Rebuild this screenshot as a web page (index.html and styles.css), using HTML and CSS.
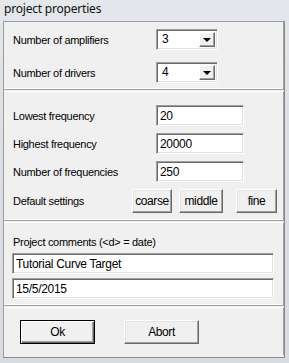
FILE: index.html
```html
<!DOCTYPE html>
<html lang="en">
<head>
    <meta charset="UTF-8">
    <title>project properties</title>
    <link rel="stylesheet" href="styles.css">
</head>
<body>
    <div class="titlebar">project properties</div>

    <div class="client">
        <div class="panel panel-counts">
            <label class="label">Number of amplifiers</label>
            <div class="combo">
                <span class="combo-value">3</span>
                <span class="combo-btn"><span class="arrow"></span></span>
            </div>
            <label class="label">Number of drivers</label>
            <div class="combo">
                <span class="combo-value">4</span>
                <span class="combo-btn"><span class="arrow"></span></span>
            </div>
        </div>

        <div class="panel panel-freq">
            <label class="label">Lowest frequency</label>
            <input class="edit edit-short" type="text" value="20">
            <label class="label">Highest frequency</label>
            <input class="edit edit-short" type="text" value="20000">
            <label class="label">Number of frequencies</label>
            <input class="edit edit-short" type="text" value="250">
            <label class="label label-defaults">Default settings</label>
            <div class="presets">
                <button class="button btn-coarse">coarse</button>
                <button class="button btn-middle">middle</button>
                <button class="button btn-fine">fine</button>
            </div>
        </div>

        <div class="panel panel-comments">
            <label class="label">Project comments (&lt;d&gt; = date)</label>
            <input class="edit edit-long" type="text" value="Tutorial Curve Target">
            <input class="edit edit-long" type="text" value="15/5/2015">
        </div>

        <div class="panel panel-actions">
            <button class="button button-wide button-default">Ok</button>
            <button class="button button-wide">Abort</button>
        </div>
    </div>
</body>
</html>
```

FILE: styles.css
```css
html, body {
    margin: 0;
    padding: 0;
}

body {
    width: 289px;
    height: 363px;
    overflow: hidden;
    font-family: "Liberation Sans", Arial, sans-serif;
    font-size: 11px;
    letter-spacing: -0.3px;
    color: #000;
    background: linear-gradient(180deg, #e4e7eb 0%, #dadfe5 40%, #d7dce3 100%);
}

.titlebar {
    height: 20px;
    line-height: 17px;
    padding-left: 4px;
    font-family: "Noto Sans", "Open Sans", sans-serif;
    font-size: 12px;
    letter-spacing: -0.2px;
    color: #111;
    box-sizing: border-box;
}

.client {
    margin-left: 3px;
    width: 282px;
    height: 337px;
    margin-top: 1px;
    background-color: #f0f0f0;
    border-left: 1px solid #9c9c9c;
    border-top: 1px solid #9c9c9c;
    border-right: 1px solid #8a8a8a;
    border-bottom: 1px solid #8a8a8a;
    box-sizing: border-box;
}

.panel {
    border-bottom: 1px solid #a0a0a0;
    box-shadow: inset 0 -1px 0 #fff;
    border-right: 1px solid #a0a0a0;
    box-sizing: border-box;
}

.panel + .panel {
    border-top: 1px solid #fff;
    margin-top: 1px;
}

.label {
    padding-left: 9px;
    white-space: nowrap;
}

/* top panel: the two combo boxes */
.panel-counts {
    height: 68px;
    display: grid;
    grid-template-columns: 152px 62px;
    grid-auto-rows: 21px;
    row-gap: 12px;
    align-items: center;
    padding-top: 7px;
}

.combo {
    height: 21px;
    display: flex;
    background: #fff;
    border-top: 1px solid #a0a0a0;
    border-left: 1px solid #a0a0a0;
    border-right: 1px solid #fff;
    border-bottom: 1px solid #fff;
    box-shadow: inset 1px 1px 0 #696969, inset -1px -1px 0 #e3e3e3;
    box-sizing: border-box;
    padding: 2px;
}

.combo-value {
    flex: 1;
    padding-left: 3px;
    line-height: 15px;
    font-size: 12px;
}

.combo-btn {
    width: 16px;
    background: #f0f0f0;
    border-top: 1px solid #fff;
    border-left: 1px solid #fff;
    border-right: 1px solid #696969;
    border-bottom: 1px solid #696969;
    box-shadow: inset -1px -1px 0 #a0a0a0;
    box-sizing: border-box;
    display: flex;
    align-items: center;
    justify-content: center;
}

.arrow {
    width: 0;
    height: 0;
    border-left: 4px solid transparent;
    border-right: 4px solid transparent;
    border-top: 4px solid #000;
    margin-left: -1px;
}

/* middle panel: frequency settings */
.panel-freq {
    height: 130px;
    display: grid;
    grid-template-columns: 152px 88px;
    grid-template-rows: 21px 21px 21px 24px;
    row-gap: 7px;
    align-items: center;
    padding-top: 13px;
}

.edit {
    height: 21px;
    font-family: "Liberation Sans", Arial, sans-serif;
    font-size: 12px;
    letter-spacing: -0.3px;
    color: #000;
    background: #fff;
    border-top: 1px solid #a0a0a0;
    border-left: 1px solid #a0a0a0;
    border-right: 1px solid #fff;
    border-bottom: 1px solid #fff;
    box-shadow: inset 1px 1px 0 #696969, inset -1px -1px 0 #e3e3e3;
    box-sizing: border-box;
    padding: 0 0 0 3px;
    margin: 0;
    outline: none;
}

.edit-short {
    width: 88px;
}

.label-defaults {
    align-self: start;
    padding-top: 6px;
}

.presets {
    display: flex;
    gap: 7px;
    margin-left: -24px;
    width: 150px;
}

.button {
    height: 24px;
    padding: 0;
    font-family: "Liberation Sans", Arial, sans-serif;
    font-size: 12px;
    letter-spacing: -0.4px;
    color: #000;
    background: #f0f0f0;
    border-top: 1px solid #fff;
    border-left: 1px solid #fff;
    border-right: 1px solid #696969;
    border-bottom: 1px solid #696969;
    box-shadow: inset -1px -1px 0 #a0a0a0, inset 1px 1px 0 #e3e3e3;
    box-sizing: border-box;
    cursor: pointer;
}

.btn-coarse { width: 40px; }
.btn-middle { width: 44px; }
.btn-fine { width: 41px; margin-left: 6px; }

/* comments panel */
.panel-comments {
    height: 84px;
    display: flex;
    flex-direction: column;
    padding-top: 13px;
}

.panel-comments .label {
    line-height: 13px;
    margin-bottom: 4px;
}

.edit-long {
    width: 262px;
    margin-left: 8px;
    margin-bottom: 4px;
}

/* action buttons */
.panel-actions {
    height: 48px;
    display: flex;
    gap: 29px;
    padding: 12px 0 0 16px;
    border-bottom: none;
    box-shadow: none;
}

.button-wide {
    width: 75px;
    height: 24px;
}

.button-default {
    border: 1px solid #000;
    box-shadow: inset 1px 1px 0 #fff, inset -1px -1px 0 #696969, inset -2px -2px 0 #a0a0a0;
}
```
